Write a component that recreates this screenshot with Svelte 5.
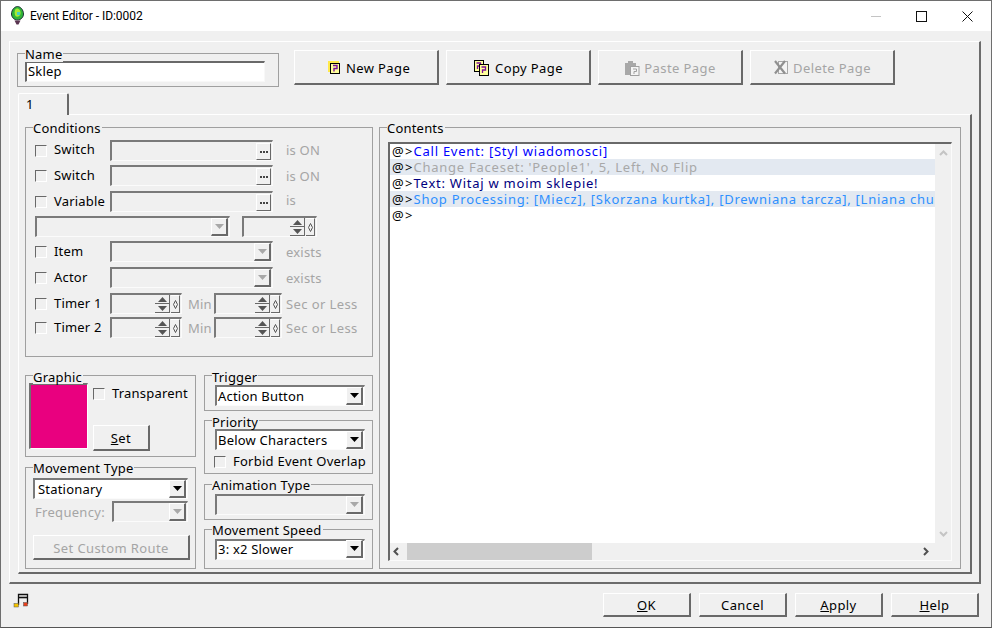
<script>
</script>

{#snippet dots()}
  <span class="ell"><i></i><i></i><i></i></span>
{/snippet}

{#snippet spin()}
  <span class="spinbtns">
    <span class="sb"><svg width="9" height="5" viewBox="0 0 9 5"><path d="M4.500 0 9 5H0z" fill="#555"/></svg></span>
    <span class="sb"><svg width="9" height="5" viewBox="0 0 9 5"><path d="M4.500 5 9 0H0z" fill="#555"/></svg></span>
  </span>
  <span class="sbx"><svg width="5" height="9" viewBox="0 0 5 9"><path d="M2.500 0.500 4.500 4.500 2.500 8.500 .5 4.500z" fill="none" stroke="#555"/></svg></span>
{/snippet}

{#snippet arrow(dis)}
  <span class="drop">
    <svg width="9" height="5" viewBox="0 0 9 5"><path d="M0 0H9L4.500 5z" fill={dis ? '#a8a8a8' : '#000'}/></svg>
  </span>
{/snippet}

<div class="win">
  <header class="title">
    <svg class="gem" width="13" height="19" viewBox="0 0 13 19">
      <path d="M6.500 .5C9.500 .5 12.500 4 12.500 8c0 3-2.500 6-6 6s-6-3-6-6c0-4 3-7.500 6-7.500z" fill="#2fb33a" stroke="#20313a"/>
      <path d="M6 2.500C8.500 2.500 10 5 9.500 8c-.5 2-2.500 3-4.500 2.500C3 9 3 2.500 6 2.500z" fill="#a6ea34"/>
      <path d="M6 6h3v3H6z" fill="#43cfc4"/>
      <path d="M3.500 14.500h6L7.500 18.500h-2z" fill="#5a3450"/>
    </svg>
    <span class="ttext">Event Editor - ID:0002</span>
    <div class="ctrls">
      <span class="ctl min"></span>
      <span class="ctl max"></span>
      <svg class="ctl" width="11" height="11" viewBox="0 0 11 11"><path d="M.5.500l10 10M10.500.500l-10 10" stroke="#111" fill="none"/></svg>
    </div>
  </header>

  <div class="panel">
    <div class="toprow">
      <div class="group namegrp">
        <span class="lg">Name</span>
        <div class="input white">Sklep</div>
      </div>
      <div class="pagebtns">
        <button class="btn page first">
          <svg width="13" height="13" viewBox="0 0 13 13"><rect x="0" y="0" width="11" height="11" fill="#ffe94a"/><rect x="2.500" y="2.500" width="9" height="10" fill="#ffff9c" stroke="#000"/><path d="M5 4.500h4v3H6v3" fill="none" stroke="#7a0f9a" stroke-width="1.400"/></svg>
          New Page
        </button>
        <button class="btn page">
          <svg width="18" height="17" viewBox="0 0 18 17"><rect x="1.500" y="1.500" width="9" height="11" fill="#ffff9c" stroke="#000"/><path d="M3.500 4h4v3h-3v3" fill="none" stroke="#7a0f9a" stroke-width="1.300"/><rect x="6.500" y="5.500" width="9" height="11" fill="#ffff9c" stroke="#000"/><path d="M8.500 8h4v3h-3v3" fill="none" stroke="#7a0f9a" stroke-width="1.300"/></svg>
          Copy Page
        </button>
        <button class="btn page off" disabled>
          <svg width="16" height="16" viewBox="0 0 16 16"><path d="M1 3h3V1h5v2h3v5H8v7H1z" fill="#a8a8a8"/><rect x="6.500" y="6.500" width="8.500" height="9" fill="#f4f4f4" stroke="#a0a0a0"/><path d="M9 9h3.500v2.500H10V14" fill="none" stroke="#a0a0a0"/></svg>
          Paste Page
        </button>
        <button class="btn page off" disabled>
          <svg width="16" height="15" viewBox="0 0 16 15"><rect x="5.500" y="1.500" width="9" height="12" fill="#f4f4f4" stroke="#a8a8a8"/><path d="M2 1l10 12.500M12 1 2 13.500" stroke="#909090" stroke-width="2.200" fill="none"/></svg>
          Delete Page
        </button>
      </div>
    </div>

    <div class="tabs"><span class="tab">1</span></div>

    <div class="tabpanel">
      <div class="leftcol">
        <div class="group cond">
          <span class="lg">Conditions</span>
          <div class="row r1">
            <span class="cb"></span><span class="lab">Switch</span>
            <span class="field w163">{@render dots()}</span><span class="st">is ON</span>
          </div>
          <div class="row r4">
            <span class="cb"></span><span class="lab">Switch</span>
            <span class="field w163">{@render dots()}</span><span class="st">is ON</span>
          </div>
          <div class="row r5">
            <span class="cb"></span><span class="lab">Variable</span>
            <span class="field w163">{@render dots()}</span><span class="st up">is</span>
          </div>
          <div class="row r4">
            <span class="field w195">{@render arrow(true)}</span>
            <span class="field w75 sp">{@render spin()}</span>
          </div>
          <div class="row r4">
            <span class="cb"></span><span class="lab">Item</span>
            <span class="field w163">{@render arrow(true)}</span><span class="st">exists</span>
          </div>
          <div class="row r5">
            <span class="cb"></span><span class="lab">Actor</span>
            <span class="field w163">{@render arrow(true)}</span><span class="st">exists</span>
          </div>
          <div class="row r5">
            <span class="cb"></span><span class="lab">Timer 1</span>
            <span class="field w72">{@render spin()}</span><span class="st mn">Min</span>
            <span class="field w68">{@render spin()}</span><span class="st sc">Sec or Less</span>
          </div>
          <div class="row r3">
            <span class="cb"></span><span class="lab">Timer 2</span>
            <span class="field w72">{@render spin()}</span><span class="st mn">Min</span>
            <span class="field w68">{@render spin()}</span><span class="st sc">Sec or Less</span>
          </div>
        </div>

        <div class="bottom">
          <div class="stack a">
            <div class="group graphic">
              <span class="lg low">Graphic</span>
              <div class="swatch"></div>
              <div class="gside">
                <label class="chk"><span class="cb"></span>Transparent</label>
                <button class="btn setb"><u>S</u>et</button>
              </div>
            </div>
            <div class="group move">
              <span class="lg">Movement Type</span>
              <div class="field white combo w152">Stationary{@render arrow(false)}</div>
              <div class="freq"><span class="st">Frequency:</span><span class="field w76">{@render arrow(true)}</span></div>
              <button class="btn route off" disabled>Set Custom Route</button>
            </div>
          </div>
          <div class="stack b">
            <div class="group trig">
              <span class="lg low">Trigger</span>
              <div class="field white combo w150">Action Button{@render arrow(false)}</div>
            </div>
            <div class="group prio">
              <span class="lg low">Priority</span>
              <div class="field white combo w150">Below Characters{@render arrow(false)}</div>
              <label class="chk ov"><span class="cb"></span>Forbid Event Overlap</label>
            </div>
            <div class="group anim">
              <span class="lg">Animation Type</span>
              <div class="field combo w150">{@render arrow(true)}</div>
            </div>
            <div class="group speed">
              <span class="lg">Movement Speed</span>
              <div class="field white combo w150">3: x2 Slower{@render arrow(false)}</div>
            </div>
          </div>
        </div>
      </div>

      <div class="group contents">
        <span class="lg">Contents</span>
        <div class="list">
          <div class="rows">
            <div class="line"><b>@&gt;</b><span class="c1">Call Event: [Styl wiadomosci]</span></div>
            <div class="line alt"><b>@&gt;</b><span class="c2">Change Faceset: 'People1', 5, Left, No Flip</span></div>
            <div class="line"><b>@&gt;</b><span class="c3">Text: Witaj w moim sklepie!</span></div>
            <div class="line alt"><b>@&gt;</b><span class="c4">Shop Processing: [Miecz], [Skorzana kurtka], [Drewniana tarcza], [Lniana chu</span></div>
            <div class="line"><b>@&gt;</b></div>
          </div>
          <div class="vbar">
            <svg width="9" height="6" viewBox="0 0 9 6"><path d="M1 5l3.500-3.500L8 5" fill="none" stroke="#c4c4c4" stroke-width="2"/></svg>
            <svg width="9" height="6" viewBox="0 0 9 6"><path d="M1 1l3.500 3.500L8 1" fill="none" stroke="#c4c4c4" stroke-width="2"/></svg>
          </div>
          <div class="hbar">
            <svg width="6" height="9" viewBox="0 0 6 9"><path d="M5 1 1.500 4.500 5 8" fill="none" stroke="#505050" stroke-width="2"/></svg>
            <div class="track"><div class="thumb"></div></div>
            <svg width="6" height="9" viewBox="0 0 6 9"><path d="M1 1l3.500 3.500L1 8" fill="none" stroke="#505050" stroke-width="2"/></svg>
          </div>
        </div>
      </div>
    </div>
  </div>

  <footer class="foot">
    <svg class="music" width="16" height="15" viewBox="0 0 16 15">
      <path d="M5.500 12V1.500h9V11" fill="none" stroke="#111" stroke-width="1.300"/>
      <path d="M5.500 4.500h9" stroke="#111" stroke-width="1.600"/>
      <rect x="1" y="10.500" width="4.500" height="3.500" fill="#f5c400" stroke="#555" stroke-width=".5"/>
      <rect x="10.500" y="9.500" width="4" height="3.500" fill="#e8401c" stroke="#555" stroke-width=".5"/>
    </svg>
    <div class="actions">
      <button class="btn act"><u>O</u>K</button>
      <button class="btn act">Cancel</button>
      <button class="btn act"><u>A</u>pply</button>
      <button class="btn act"><u>H</u>elp</button>
    </div>
  </footer>
</div>

<style>
  :global(body) { margin: 0; background: #f0f0f0; }
  .win {
    width: 992px; height: 628px; box-sizing: border-box; background: #f0f0f0;
    border: 1px solid #6e6e6e; border-bottom-color: #555;
    font: 13px "Noto Sans", "Open Sans", sans-serif; letter-spacing: .2px; color: #000;
    display: flex; flex-direction: column; overflow: hidden;
  }
  .title { height: 30px; flex: none; background: #fff; display: flex; align-items: center; padding-left: 10px; position: relative; }
  .gem { margin-top: -1px; }
  .ttext { font: 12px Roboto, "Noto Sans", sans-serif; letter-spacing: -.05px; margin-left: 6px; color: #000; }
  .ctrls { margin-left: auto; display: flex; align-items: center; }
  .ctl { display: block; }
  .min { width: 10px; height: 1px; background: #c4c4c4; margin-right: 35px; }
  .max { border: 1px solid #111; margin-right: 35px; box-sizing: content-box; width: 9px; height: 9px; }
  .ctrls svg { margin-right: 18px; }

  .panel {
    margin: 10px 10px 0 8px; height: 543px; box-sizing: border-box; flex: none;
    border: 1px solid #fff; border-right: 2px solid #6c6c6c; border-bottom: 2px solid #6c6c6c;
    padding: 8px 0 0 7px;
  }
  .toprow { display: flex; align-items: flex-start; height: 43px; }
  .group { position: relative; box-sizing: border-box; border: 1px solid #a0a0a0; }
  .lg { position: absolute; z-index: 1; left: 7px; top: -7px; background: #f0f0f0; line-height: 15px; padding: 0 1px 0 0; white-space: nowrap; }
  .lg.low { top: -5px; line-height: 13px; }
  .namegrp { width: 262px; height: 34px; margin-top: 3px; padding: 7px 0 0 7px; }
  .input { width: 240px; height: 21px; box-sizing: border-box; border: 2px solid #696969; border-right: 1px solid #f8f8f8; border-bottom: 1px solid #f8f8f8; padding-left: 1px; line-height: 17px; background: #fff; }
  .pagebtns { display: flex; margin-left: 15px; gap: 7px; }
  .btn {
    box-sizing: border-box; background: #f0f0f0; font: inherit; letter-spacing: .4px; color: #000; padding: 1px 0 0; margin: 0;
    border: 1px solid #fff; border-right: 2px solid #696969; border-bottom: 2px solid #696969;
    display: flex; align-items: center; justify-content: center;
  }
  .btn.off { color: #a5a5a5; }
  .page { width: 145px; height: 35px; gap: 4px; }
  .page.first { padding-left: 6px; gap: 5px; }
  .tabs { height: 21px; padding-left: 1px; }
  .tab { display: block; box-sizing: border-box; width: 51px; height: 22px; border: 1px solid #fff; border-bottom: none; border-right: 2px solid #696969; border-radius: 2px 2px 0 0; padding: 1px 0 0 7px; position: relative; z-index: 1; background: #f0f0f0; }
  .tabpanel {
    margin-left: 1px; width: 954px; height: 460px; box-sizing: border-box;
    border: 1px solid #fff; border-right: 2px solid #696969; border-bottom: 2px solid #696969;
    padding: 12px 0 0 6px; display: flex; gap: 6px;
  }
  .leftcol { width: 348px; flex: none; }
  .cond { height: 230px; padding: 12px 0 0 9px; }
  .row { display: flex; align-items: center; height: 21px; }
  .r3 { margin-top: 3px; } .r4 { margin-top: 4px; } .r5 { margin-top: 5px; }
  .cb { width: 12px; height: 12px; flex: none; box-sizing: border-box; border: 1px solid #696969; border-right-color: #fff; border-bottom-color: #fff; background: #f0f0f0; }
  .lab { width: 56px; margin-left: 7px; margin-bottom: 2px; flex: none; white-space: nowrap; }
  .r1 .lab { margin-bottom: 4px; }
  .r1 .st { margin-bottom: 2px; }
  .field { position: relative; display: flex; align-items: center; justify-content: flex-end; box-sizing: border-box; height: 21px; flex: none; border: 2px solid #7a7a7a; border-right: 1px solid #fbfbfb; border-bottom: 1px solid #fbfbfb; white-space: nowrap; padding-right: 1px; }
  .field.white { background: #fff; justify-content: space-between; padding-left: 1px; }
  .w163 { width: 163px; } .w195 { width: 195px; } .w75 { width: 75px; margin-left: 12px; }
  .w72 { width: 72px; } .w68 { width: 68px; } .w76 { width: 76px; margin-left: 7px; } .w152 { width: 155px; } .w150 { width: 150px; }
  .st { color: #a5a5a5; margin-left: 13px; white-space: nowrap; }
  .st.up { margin-top: -3px; }
  .st.mn { margin-left: 6px; width: 26px; }
  .st.sc { margin-left: 4px; letter-spacing: .4px; }
  .ell { width: 15px; height: 17px; box-sizing: border-box; background: #f0f0f0; border: 1px solid #fff; border-right: 1px solid #696969; border-bottom: 1px solid #696969; display: flex; align-items: center; justify-content: center; gap: 1px; padding-top: 2px; }
  .ell i { width: 2px; height: 2px; background: #444; }
  .drop { width: 17px; height: 18px; box-sizing: border-box; background: #f0f0f0; border: 1px solid #fff; border-right: 2px solid #696969; border-bottom: 2px solid #696969; display: flex; align-items: center; justify-content: center; flex: none; }
  .spinbtns { display: flex; flex-direction: column; width: 15px; height: 18px; }
  .sb { flex: 1; display: flex; align-items: center; justify-content: center; background: #f0f0f0; border-right: 1px solid #696969; border-bottom: 1px solid #696969; box-sizing: border-box; }
  .sbx { width: 9px; height: 18px; display: flex; align-items: center; justify-content: center; box-sizing: border-box; border-right: 1px solid #696969; border-bottom: 1px solid #696969; border-top: 1px solid #fff; margin-left: 1px; }

  .bottom { display: flex; gap: 8px; margin-top: 18px; }
  .stack { display: flex; flex-direction: column; }
  .stack.a { width: 171px; gap: 10px; }
  .stack.b { width: 169px; gap: 9px; }
  .graphic { height: 82px; padding: 7px 0 0 3px; display: flex; }
  .swatch { width: 59px; height: 66px; box-sizing: border-box; background: #e9007f; border: 2px solid #707070; border-right: 1px solid #fff; border-bottom: 1px solid #fff; flex: none; }
  .gside { margin-left: 5px; display: flex; flex-direction: column; padding-top: 3px; }
  .chk { display: flex; align-items: center; gap: 7px; white-space: nowrap; line-height: 15px; }
  .setb { width: 57px; height: 26px; margin-top: 24px; }
  .move { height: 102px; padding: 10px 0 0 7px; }
  .move .white { padding-left: 3px; }
  .combo { color: #000; padding-left: 1px; }
  .speed .combo { padding-bottom: 2px; }
  .freq { display: flex; align-items: center; margin-top: 2px; }
  .freq .st { margin-left: 2px; letter-spacing: .3px; }
  .freq .w76 { margin-left: auto; margin-right: 7px; }
  .route { width: 157px; height: 25px; margin-top: 13px; }
  .trig { height: 36px; padding: 10px 0 0 10px; }
  .trig .field, .prio .field { margin-top: -1px; }
  .prio { height: 54px; padding: 9px 0 0 10px; }
  .ov { margin: 4px 0 0 -1px; gap: 7px; letter-spacing: .25px; }
  .anim { height: 36px; padding: 9px 0 0 10px; margin-top: 1px; }
  .speed { height: 40px; padding: 9px 0 0 10px; }

  .contents { width: 582px; height: 442px; padding: 14px 0 0 8px; }
  .list { position: relative; width: 564px; height: 419px; box-sizing: border-box; border: 2px solid #696969; border-right: 1px solid #fbfbfb; border-bottom: 1px solid #fbfbfb; background: #fff; display: grid; grid-template-columns: 545px 16px; grid-template-rows: 399px 17px; letter-spacing: .75px; }
  .rows { padding: 0; overflow: hidden; min-width: 0; margin-top: -1px; }
  .line { height: 16px; line-height: 16px; white-space: nowrap; padding-left: 2px; overflow: hidden; }
  .line b, .line span { display: inline-block; height: 16px; line-height: 16px; vertical-align: top; }
  .line b { font-weight: 400; color: #000; letter-spacing: 1.2px; }
  .alt { background: #e3e9f1; }
  .c1 { color: #0000ff; } .c2 { color: #a8a8a8; } .c3 { color: #000080; } .c4 { color: #2e90ff; }
  .vbar { grid-row: 1; grid-column: 2; background: #f0f0f0; display: flex; flex-direction: column; align-items: center; justify-content: space-between; padding: 6px 0; box-sizing: border-box; }
  .hbar { grid-row: 2; grid-column: 1 / span 2; background: #f0f0f0; display: flex; align-items: center; padding: 0 0 0 3px; }
  .hbar svg:last-child { margin: 0 22px 0 0; }
  .track { flex: 1; height: 100%; margin: 0 0 0 8px; }
  .thumb { width: 185px; height: 100%; background: #cdcdcd; }

  .foot { flex: 1; display: flex; padding: 0 0 0 12px; position: relative; }
  .music { margin-top: 9px; }
  .actions { margin-left: auto; display: flex; gap: 8px; padding: 9px 12px 0 0; }
  .act { width: 88px; height: 24px; padding-top: 0; }
</style>
